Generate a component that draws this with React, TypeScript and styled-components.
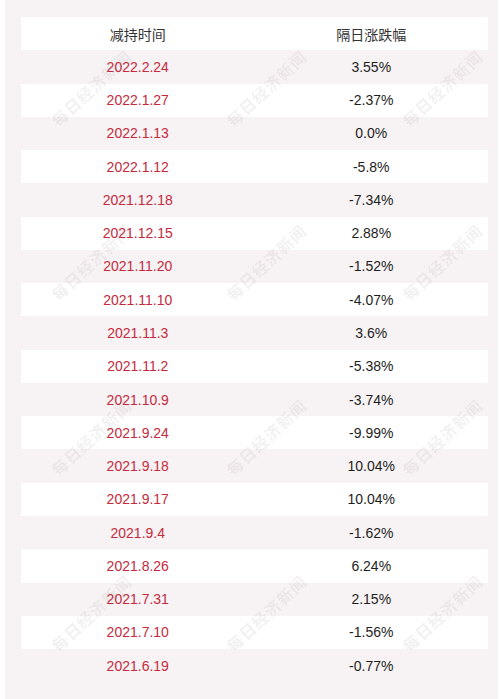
import React from "react";
import styled, { createGlobalStyle } from "styled-components";

const Global = createGlobalStyle`
  html, body { margin: 0; padding: 0; background: #ffffff; }
  body { font-family: "Liberation Sans", "Noto Sans CJK SC", sans-serif; }
`;

const Page = styled.div`
  position: relative;
  margin-left: 5px;
  width: 493px;
  height: 699px;
  box-sizing: border-box;
  padding: 17px 10px 0 16px;
  background: #f7f3f4;
  overflow: hidden;
`;

const Table = styled.div`
  display: flex;
  flex-direction: column;
`;

const Row = styled.div<{ $white: boolean }>`
  display: grid;
  grid-template-columns: 1fr 1fr;
  height: 33.28px;
  align-items: center;
  background: ${(p) => (p.$white ? "#ffffff" : "transparent")};
`;

const Cell = styled.div<{ $kind: "head" | "date" | "value" }>`
  text-align: center;
  font-size: 14px;
  line-height: 16px;
  font-family: ${(p) =>
    p.$kind === "head"
      ? `"Noto Sans CJK SC", "Liberation Sans", sans-serif`
      : `"Liberation Sans", Arial, sans-serif`};
  color: ${(p) => (p.$kind === "date" ? "#c52a3d" : p.$kind === "head" ? "#333333" : "#1e1e1e")};
`;

const MarkLayer = styled.div`
  position: absolute;
  inset: 0;
  pointer-events: none;
`;

const Mark = styled.div`
  position: absolute;
  width: 120px;
  height: 20px;
  margin-left: -60px;
  margin-top: -10px;
  text-align: center;
  font-family: "Noto Sans CJK SC", sans-serif;
  font-weight: 700;
  font-size: 16px;
  line-height: 20px;
  letter-spacing: 1px;
  color: rgba(60, 40, 45, 0.08);
  transform: rotate(-43deg);
  white-space: nowrap;
`;

const rows: [string, string][] = [
  ["2022.2.24", "3.55%"],
  ["2022.1.27", "-2.37%"],
  ["2022.1.13", "0.0%"],
  ["2022.1.12", "-5.8%"],
  ["2021.12.18", "-7.34%"],
  ["2021.12.15", "2.88%"],
  ["2021.11.20", "-1.52%"],
  ["2021.11.10", "-4.07%"],
  ["2021.11.3", "3.6%"],
  ["2021.11.2", "-5.38%"],
  ["2021.10.9", "-3.74%"],
  ["2021.9.24", "-9.99%"],
  ["2021.9.18", "10.04%"],
  ["2021.9.17", "10.04%"],
  ["2021.9.4", "-1.62%"],
  ["2021.8.26", "6.24%"],
  ["2021.7.31", "2.15%"],
  ["2021.7.10", "-1.56%"],
  ["2021.6.19", "-0.77%"],
];

const markXs = [86, 261, 437];
const markYs = [88, 262, 437, 613];

export default function App() {
  return (
    <>
      <Global />
      <Page>
        <Table>
          <Row $white>
            <Cell $kind="head">减持时间</Cell>
            <Cell $kind="head">隔日涨跌幅</Cell>
          </Row>
          {rows.map(([d, v], i) => (
            <Row key={d} $white={i % 2 === 1}>
              <Cell $kind="date">{d}</Cell>
              <Cell $kind="value">{v}</Cell>
            </Row>
          ))}
        </Table>
        <MarkLayer>
          {markYs.map((y) =>
            markXs.map((x) => (
              <Mark key={`${x}-${y}`} style={{ left: x, top: y }}>
                每日经济新闻
              </Mark>
            ))
          )}
        </MarkLayer>
      </Page>
    </>
  );
}
